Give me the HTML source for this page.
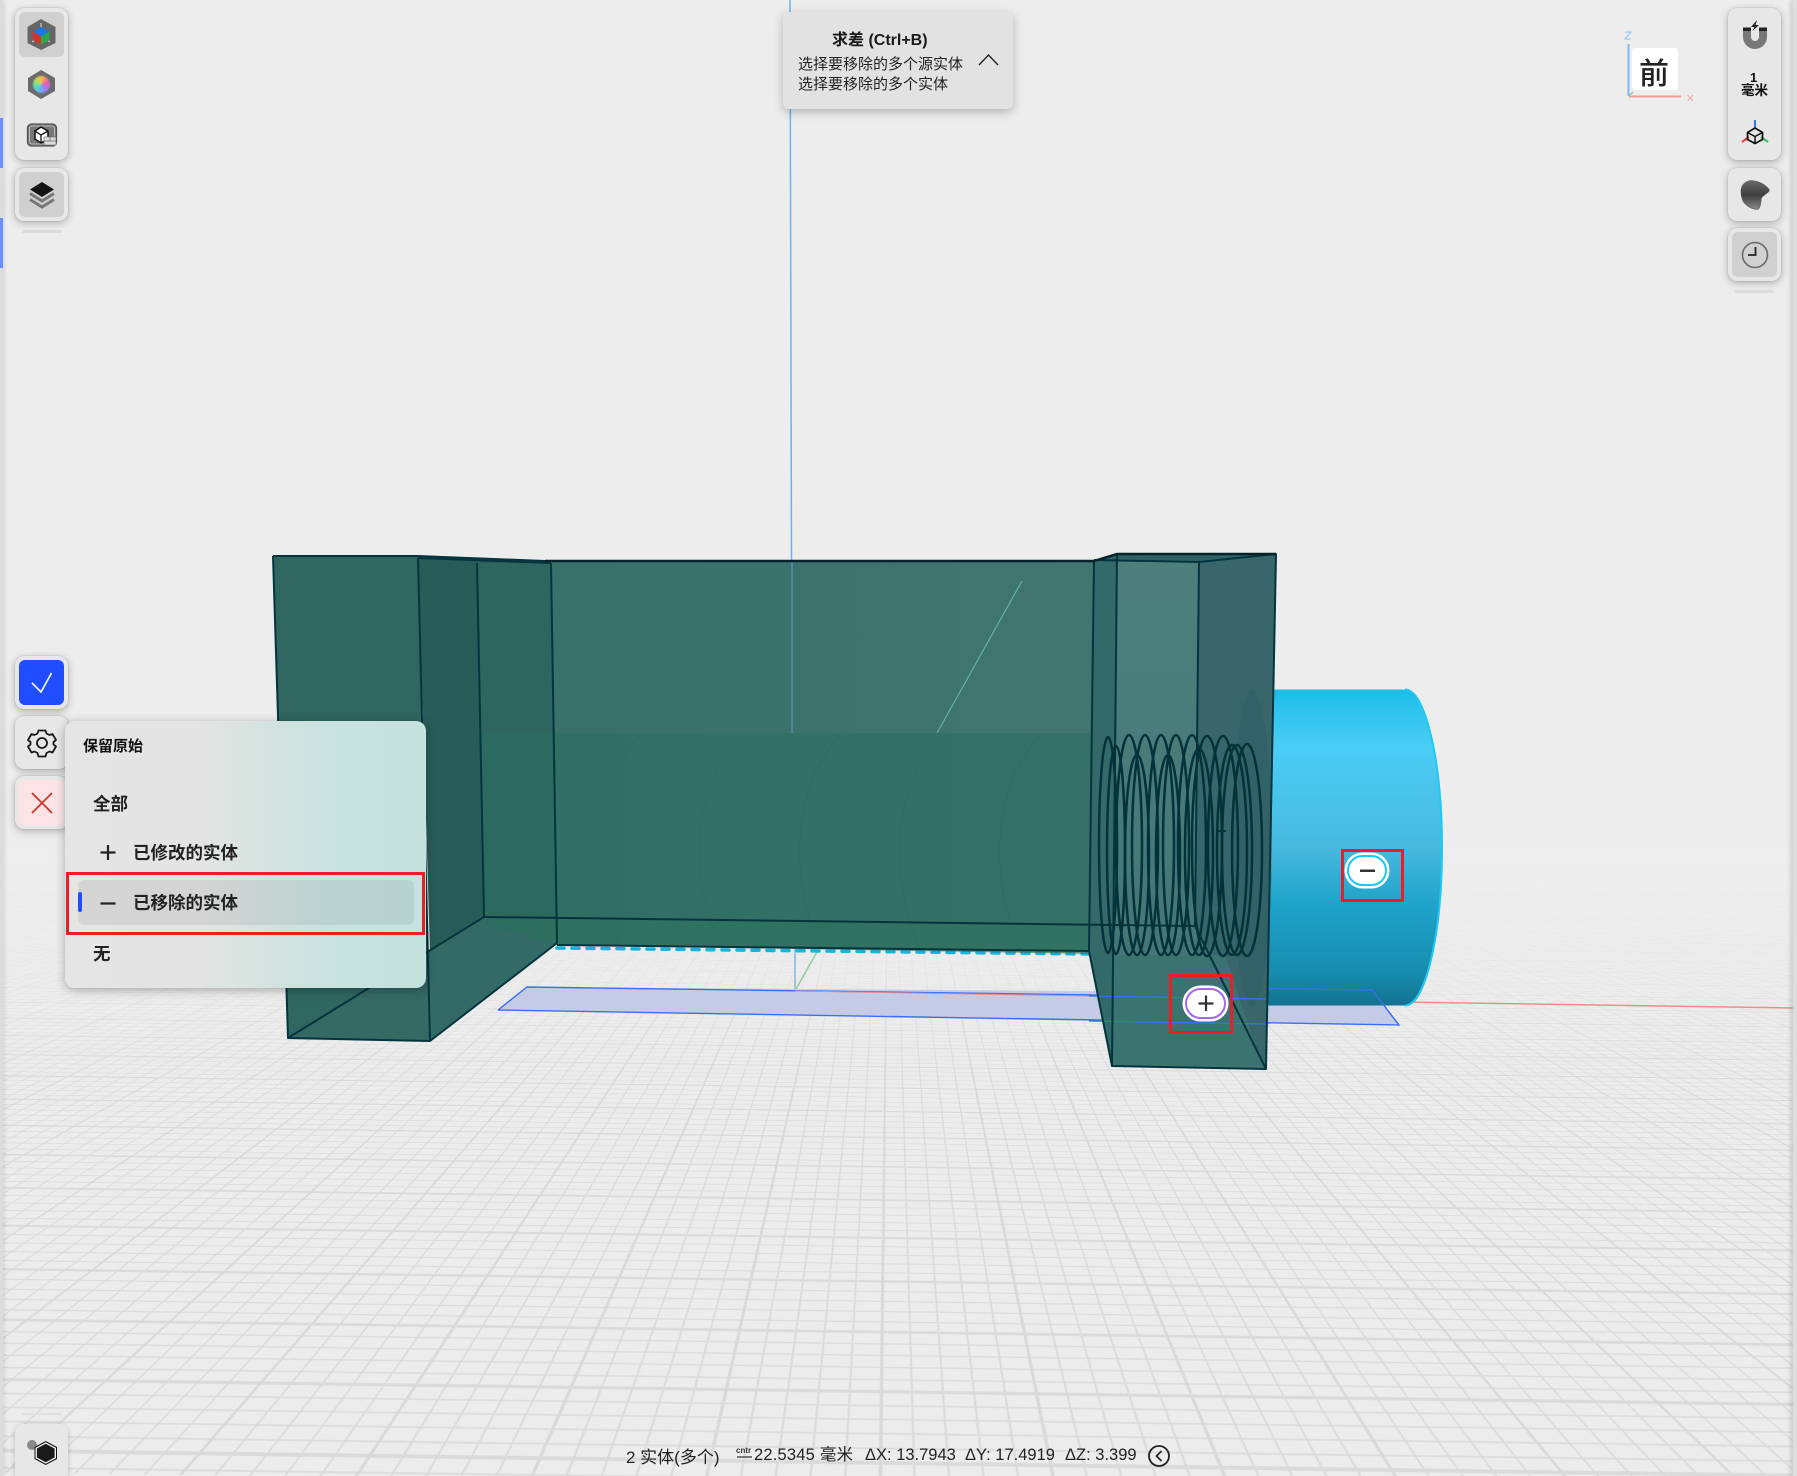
<!DOCTYPE html>
<html><head><meta charset="utf-8"><style>
*{box-sizing:border-box;margin:0;padding:0}
html,body{width:1797px;height:1476px;overflow:hidden;background:#ededed}
body{position:relative;font-family:"Liberation Sans","Noto Sans CJK SC",sans-serif;color:#111}
.g{position:absolute;left:0;top:0;width:1797px;height:1476px;overflow:hidden;background:#ececec}
.r{position:absolute;left:0;top:0;width:1797px;height:1476px;perspective:1000px;perspective-origin:890px 660px;transform:rotate(.8deg);transform-origin:890px 660px}
.p{position:absolute;left:-2610px;top:-130px;width:7000px;height:2900px;transform:translateZ(-1250px) rotateX(90deg);background-color:#ececec;background-image:linear-gradient(90deg,#d9d9d9 3px,transparent 3px),linear-gradient(0deg,#dadada 3.5px,transparent 3.5px),linear-gradient(90deg,#dbdbdb 2px,transparent 2px),linear-gradient(0deg,#dcdcdc 2.5px,transparent 2.5px);background-size:140px 100%,100% 80px,28px 100%,100% 16px}
.f{position:absolute;left:0;top:0;width:1797px;height:1100px;background:linear-gradient(180deg,#ededed 0,#ededed 840px,rgba(237,237,237,.85) 920px,rgba(237,237,237,.35) 1000px,rgba(237,237,237,0) 1080px)}
svg.s{position:absolute;left:0;top:0}
.pn{position:absolute;width:53px;background:#e7e7e7;border-radius:9px;box-shadow:0 2px 8px rgba(0,0,0,.28),0 0 1px rgba(0,0,0,.3);overflow:hidden}
.in{position:absolute;left:4px;top:4px;width:45px;height:45px;border-radius:6px;background:#d0d0d0}
.h{position:absolute;height:3px;width:40px;background:#dcdcdc;border-radius:2px}
.t{position:absolute;line-height:1;white-space:nowrap}
.b{font-weight:700}
.st{font-size:16.5px;color:#222}
</style></head><body>
<div class="g"><div class="r"><div class="p"></div></div><div class="f"></div></div>

<svg class="s" width="1797" height="1476" viewBox="0 0 1797 1476">
<defs>
<linearGradient id="cy" x1="0" y1="0" x2="0" y2="1"><stop offset="0" stop-color="#1cbde8"/><stop offset=".18" stop-color="#4acdf6"/><stop offset=".5" stop-color="#48b9de"/><stop offset=".68" stop-color="#1fa3ca"/><stop offset=".9" stop-color="#168cae"/><stop offset="1" stop-color="#137290"/></linearGradient>
<linearGradient id="mn" x1="0" y1="0" x2="1" y2="0"><stop offset="0" stop-color="#38706a"/><stop offset="1" stop-color="#427570"/></linearGradient>
<linearGradient id="pn" x1="0" y1="0" x2="0" y2="1"><stop offset="0" stop-color="#4e7f7d"/><stop offset="1" stop-color="#3f7573"/></linearGradient>
</defs>
<line x1="790" y1="0" x2="792" y2="740" stroke="#6fb0ee" stroke-width="1.5"/>
<line x1="795" y1="945" x2="795" y2="991" stroke="#7fb6ea" stroke-width="1.5"/>
<line x1="795" y1="991" x2="818" y2="950" stroke="#8fcf9c" stroke-width="1.5"/>
<line x1="1400" y1="1002" x2="1793" y2="1008" stroke="#ee8e88" stroke-width="1.5"/>
<polygon points="498,1010 527,987 1372,993 1399,1025" fill="#c5cbe6"/>
<path d="M498 1010L527 987L1240 997M498 1010L1399 1025L1372 990L1227 988" fill="none" stroke="#3d6ef0" stroke-width="1.4"/>
<line x1="795" y1="991" x2="1090" y2="996" stroke="#e08a90" stroke-width="1"/>
<path d="M1260 689.500H1407C1426 689.500 1442 760 1442 848C1442 936 1426 1005.500 1407 1005.500H1260Z" fill="url(#cy)"/>
<path d="M1405 689.500C1425 689.500 1442 760 1442 848C1442 936 1425 1005.500 1405 1005.500" fill="none" stroke="#1fcaf2" stroke-width="2"/>
<path d="M1226 988L1372 990L1399 1025" fill="none" stroke="#3d6ef0" stroke-width="1.2"/>
<line x1="557" y1="948" x2="1089" y2="954" stroke="#17b4dc" stroke-width="3.500" stroke-dasharray="7 8" stroke-linecap="round"/>
<polygon points="273,556 418,556 430,1041 288,1038" fill="#2f665f"/>
<polygon points="418,556 545,561 551,563 557,943 484,917 430,950" fill="#285c58"/>
<polygon points="477,563 551,563 557,943 484,917" fill="#2f655f"/>
<polygon points="288,1038 430,1041 557,943 484,917" fill="#346964"/>
<polygon points="430,950 484,917 557,943 430,1041" fill="#336a66"/>
<polygon points="551,561 1094,561 1089,951 557,945" fill="url(#mn)"/>
<polygon points="480,733 1150,733 1150,955 557,945 484,925" fill="#2a6e60" opacity=".5"/>
<polygon points="484,917 1195,926 1195,955 557,945" fill="#2d735e" opacity=".5"/>
<g fill="none" stroke="#2a665c" stroke-width="1.500" opacity=".18">
<path d="M620 945C590 880 590 790 640 735M720 947C690 880 690 790 740 735M820 948C790 880 790 790 840 735M920 949C890 880 890 790 940 735M1020 950C990 880 990 790 1040 735"/>
</g>
<polygon points="1094,560 1117,554 1112,1066 1089,951" fill="#336a69"/>
<polygon points="1117,554 1199,562 1195,926 1266,1069 1112,1066" fill="url(#pn)"/>
<polygon points="1199,562 1276,554 1266,1069 1195,926" fill="#38666b"/>
<polygon points="1117,554 1276,554 1199,562 1094,560" fill="#2f6264"/>
<polygon points="1112,955 1225,955 1262,1066 1112,1066" fill="#3b7371"/>
<ellipse cx="1252" cy="848" rx="20" ry="158" fill="#24585e" opacity=".28"/>
<line x1="937" y1="733" x2="1022" y2="581" stroke="#5fb59a" stroke-width="1.2"/>
<line x1="792" y1="561" x2="792" y2="733" stroke="#5f9fc0" stroke-width="1"/>
<path d="M1089 996L1266 999M1089 1021L1266 1024" stroke="#2f78e8" stroke-width="1.3" fill="none"/>
<g fill="none" stroke="#04343e" stroke-width="2" stroke-linejoin="round">
<path d="M273 556L288 1038L430 1041L557 943M273 556H418L545 561H1094L1117 554H1276L1266 1069L1112 1066L1089 951L1094 560"/>
<path d="M418 558L430 1041M288 1038L484 917M477 563L484 917M551 563L557 943M418 558L551 563"/>
<path d="M484 917L1195 926M557 945L1089 951"/>
<path d="M1117 554L1112 1066M1094 560L1199 562L1276 554M1199 562L1195 926L1266 1069"/>
<path d="M1218 831H1226"/>
</g>
<path d="M545 561H1094L1117 554H1276" fill="none" stroke="#06222a" stroke-width="2.400"/>
<g fill="none" stroke="#03323b" stroke-width="2.500">
<ellipse cx="1108" cy="845" rx="9" ry="108"/><ellipse cx="1116" cy="850" rx="9" ry="104"/>
<ellipse cx="1129" cy="845" rx="13" ry="110"/><ellipse cx="1137" cy="855" rx="12" ry="100"/>
<ellipse cx="1145" cy="845" rx="13" ry="110"/><ellipse cx="1161" cy="845" rx="13" ry="110"/>
<ellipse cx="1168" cy="855" rx="12" ry="100"/><ellipse cx="1176" cy="845" rx="13" ry="110"/>
<ellipse cx="1192" cy="845" rx="14" ry="110"/><ellipse cx="1199" cy="852" rx="14" ry="103"/>
<ellipse cx="1207" cy="846" rx="15" ry="110"/><ellipse cx="1223" cy="846" rx="15" ry="110"/>
<ellipse cx="1232" cy="850" rx="15" ry="105"/><ellipse cx="1237" cy="850" rx="15" ry="105"/>
<ellipse cx="1247" cy="850" rx="15" ry="106"/>
</g>
<rect x="1346" y="854" width="42" height="33" rx="16.500" fill="#fff" stroke="#fff" stroke-width="3"/>
<rect x="1348" y="856" width="38" height="29" rx="14.500" fill="#fff" stroke="#18c9f7" stroke-width="2"/>
<rect x="1360" y="869.500" width="15" height="2.500" fill="#333"/>
<rect x="1184" y="987" width="43" height="33" rx="16.500" fill="#fff" stroke="#fff" stroke-width="3"/>
<rect x="1186" y="989" width="39" height="29" rx="14.500" fill="#fff" stroke="#a566f0" stroke-width="2"/>
<path d="M1206 995.500V1011M1198.500 1003.500H1213.500" stroke="#333" stroke-width="2.200" fill="none"/>
<rect x="1342.500" y="850.500" width="60" height="50" fill="none" stroke="#ee1c25" stroke-width="3"/>
<rect x="1170.500" y="975.500" width="61" height="57" fill="none" stroke="#ee1c25" stroke-width="3"/>
</svg>

<div style="position:absolute;left:0;top:0;width:3px;height:1476px;background:#dcdcdc;box-shadow:1px 0 4px rgba(0,0,0,.15)"></div>
<div style="position:absolute;left:0;top:118px;width:3px;height:50px;background:#6a8eff"></div>
<div style="position:absolute;left:0;top:218px;width:3px;height:50px;background:#6a8eff"></div>
<div style="position:absolute;left:1793px;top:0;width:4px;height:1476px;background:#dedede;box-shadow:-2px 0 5px rgba(0,0,0,.18)"></div>

<div class="pn" style="left:15px;top:8px;height:152px"><div class="in"></div></div>
<div class="pn" style="left:15px;top:168px;height:53px"><div class="in"></div></div>
<div class="h" style="left:22px;top:230px"></div>
<svg class="s" width="80" height="230" viewBox="0 0 80 230">
<polygon points="41,19 55.500,27 55.500,43 41,50 27.500,43 27.500,27" fill="#666"/>
<path d="M32 42L41 36L50 42M41 23V30" stroke="#ddd" stroke-width="1" fill="none"/>
<polygon points="41,27 49.500,31.500 41,36.500 33,31.500" fill="#1b76e2"/>
<polygon points="33,31.500 41,36.500 41,45 33,40" fill="#d6322a"/>
<polygon points="49.500,31.500 41,36.500 41,45 49.500,40" fill="#2ca64a"/>
<polygon points="41,70 55,78 55,91 41,99 28,91 28,78" fill="#6b6b6b"/>
<rect x="27.500" y="124" width="29" height="22" rx="4" fill="#787878" stroke="#555" stroke-width="1.300"/>
<rect x="29.500" y="126" width="25" height="18" rx="2.500" fill="#787878" stroke="#ccc" stroke-width=".8"/>
<polygon points="41,127 48,131 48,139 41,143 35,139 35,131" fill="#fff" stroke="#111" stroke-width="1.500"/>
<path d="M35 131L41 135L48 131M41 135V143" fill="none" stroke="#111" stroke-width="1.300"/>
<rect x="44" y="137" width="12" height="8" fill="#ddd" stroke="#666" stroke-width=".6"/>
<path d="M44 141H56M50 137V141" stroke="#666" stroke-width=".8"/>
<polygon points="42,182 54,189.500 42,197 30,189.500" fill="#141414"/>
<path d="M30 193.500L42 201L54 193.500" fill="none" stroke="#777" stroke-width="3"/>
<path d="M30 199.500L42 207L54 199.500" fill="none" stroke="#777" stroke-width="3"/>
</svg>
<div style="position:absolute;left:33px;top:76px;width:17px;height:17px;border-radius:50%;background:conic-gradient(#f7c24a,#f25fa0,#b86cf0,#6fa8f5,#4fdcc8,#9fe36a,#f7c24a);filter:blur(.7px)"></div>

<div class="pn" style="left:15px;top:656px;height:53px"><div class="in" style="background:#1f4dff"></div></div>
<div class="pn" style="left:15px;top:716px;height:53px"></div>
<div class="pn" style="left:15px;top:776px;height:53px"><div class="in" style="background:#fce4e6"></div></div>
<svg class="s" width="80" height="840" viewBox="0 0 80 840">
<path d="M32 683L41 692L51.500 673" fill="none" stroke="#fff" stroke-width="1.600"/>
<g transform="translate(42 743)" fill="none" stroke="#1a1a1a" stroke-width="1.800" stroke-linejoin="round">
<circle r="5"/>
<path d="M-3.500 -12.500H3.500L4.500 -9.500L7.500 -8L10.500 -9L14 -3L11.500 -1V1.500L14 3.500L10.500 9.500L7.500 8.500L4.500 10L3.500 13.500H-3.500L-4.500 10L-7.500 8.500L-10.500 9.500L-14 3.500L-11.500 1.500V-1L-14 -3L-10.500 -9L-7.500 -8L-4.500 -9.500Z"/>
</g>
<path d="M32 793L52 813M52 793L32 813" stroke="#cf3228" stroke-width="1.700" fill="none"/>
</svg>

<div style="position:absolute;left:65px;top:721px;width:361px;height:267px;border-radius:10px;background:linear-gradient(90deg,#e5e5e5 0,#e3e4e3 38%,#d0e2de 62%,#c6e3df 80%,#c5e2df 100%);box-shadow:0 2px 10px rgba(0,0,0,.3)"></div>
<div style="position:absolute;left:78px;top:880px;width:336px;height:45px;border-radius:6px;background:rgba(0,0,0,.065)"></div>
<div style="position:absolute;left:78px;top:892px;width:4px;height:20px;border-radius:2px;background:#1f4dff"></div>
<div class="t b" style="left:83px;top:739px;font-size:15px">保留原始</div>
<div class="t b" style="left:93px;top:796px;font-size:17.500px;color:#222">全部</div>
<svg class="s" width="130" height="930" viewBox="0 0 130 930"><path d="M108 845V860M100.500 852.500H115.500" stroke="#222" stroke-width="2.200"/><path d="M100.500 903.500H115.500" stroke="#222" stroke-width="2.200"/></svg>
<div class="t b" style="left:133px;top:845px;font-size:17.500px;color:#222">已修改的实体</div>
<div class="t b" style="left:133px;top:895px;font-size:17.500px;color:#222">已移除的实体</div>
<div class="t b" style="left:93px;top:946px;font-size:17.500px;color:#222">无</div>
<div style="position:absolute;left:66px;top:872px;width:359px;height:63px;border:3px solid #ee1c25"></div>

<div style="position:absolute;left:783px;top:12px;width:230px;height:97px;border-radius:6px;background:#e2e2e2;box-shadow:0 3px 10px rgba(0,0,0,.25)"></div>
<div class="t" style="left:832px;top:33px;font-size:16px;font-weight:700;color:#1a1a1a">求差 (Ctrl+B)</div>
<div class="t" style="left:798px;top:57px;font-size:15px;color:#222">选择要移除的多个源实体</div>
<div class="t" style="left:798px;top:77px;font-size:15px;color:#222">选择要移除的多个实体</div>
<svg class="s" width="1040" height="90" viewBox="0 0 1040 90"><path d="M979 65L988.500 55L998 65" fill="none" stroke="#222" stroke-width="1.400"/></svg>

<div style="position:absolute;left:1632px;top:48px;width:46px;height:42px;background:#fff;border-radius:3px"></div>
<div class="t" style="left:1639px;top:56px;font-size:30px;font-weight:500;color:#222;font-family:'Noto Sans CJK SC',sans-serif">前</div>
<svg class="s" width="1797" height="120" viewBox="0 0 1797 120">
<path d="M1628.500 44V96" stroke="#7fb8f5" stroke-width="2"/><path d="M1629 96.500H1681" stroke="#ee9a98" stroke-width="2"/><path d="M1629 96L1633 92" stroke="#8fd09a" stroke-width="1.500"/>
<path d="M1625 32H1631L1625 39H1631" fill="none" stroke="#8fbdf0" stroke-width="1"/>
<path d="M1687.500 95L1693 101M1693 95L1687.500 101" fill="none" stroke="#eeaaa8" stroke-width="1"/>
</svg>

<div class="pn" style="left:1728px;top:8px;height:152px"></div>
<div class="pn" style="left:1728px;top:168px;height:53px"></div>
<div class="pn" style="left:1728px;top:228px;height:53px"><div class="in"></div></div>
<div class="h" style="left:1734px;top:290px"></div>
<div class="t b" style="left:1750px;top:71px;font-size:13px;color:#111">1</div>
<div class="t" style="left:1741px;top:84px;font-size:13.500px;font-weight:700;color:#111">毫米</div>
<svg class="s" width="1797" height="300" viewBox="0 0 1797 300">
<path d="M1747 31V37A8 8 0 0 0 1763 37V31" fill="none" stroke="#787878" stroke-width="8"/>
<rect x="1743" y="27.500" width="8" height="3.500" fill="#222"/><rect x="1759" y="27.500" width="8" height="3.500" fill="#222"/>
<polygon points="1757,20 1751,27 1754.500,27 1752.500,31 1759,25 1755.500,25" fill="#222"/>
<path d="M1755 120V128" stroke="#2a7cf0" stroke-width="2"/>
<path d="M1749 137L1742 142" stroke="#ee3b30" stroke-width="2"/><path d="M1761 137L1768 142" stroke="#30c060" stroke-width="2"/>
<polygon points="1755,128 1762.500,132.500 1762.500,139.500 1755,143.500 1747.500,139.500 1747.500,132.500" fill="none" stroke="#111" stroke-width="1.700"/>
<path d="M1747.500 132.500L1755 136.500L1762.500 132.500M1755 136.500V143.500" fill="none" stroke="#111" stroke-width="1.500"/>
<defs><linearGradient id="fl" x1="0" y1="0" x2="0" y2="1"><stop offset="0" stop-color="#6a6a6a"/><stop offset=".5" stop-color="#3e3e3e"/><stop offset="1" stop-color="#8a8a8a"/></linearGradient></defs>
<path d="M1741 191C1741 184 1747 180.500 1752 180.500C1759 181 1766 185 1769.500 190C1769 193 1763 195 1761.500 198C1760.500 203 1761 207 1758 209.500C1752 209.500 1746 206 1743 201C1741.500 198 1741 195 1741 191Z" fill="url(#fl)" stroke="#555" stroke-width=".6"/>
<circle cx="1755" cy="255" r="12.500" fill="none" stroke="#6a6a6a" stroke-width="1.600"/>
<path d="M1755.500 247V255H1748" fill="none" stroke="#222" stroke-width="1.800"/>
</svg>

<div class="h" style="left:22px;top:1413px;background:#e0e0e0;height:2px"></div>
<div style="position:absolute;left:15px;top:1424px;width:53px;height:60px;border-radius:9px;background:#e7e7e7;box-shadow:0 1px 6px rgba(0,0,0,.2)"></div>
<svg class="s" width="80" height="1476" viewBox="0 0 80 1476">
<circle cx="32" cy="1445" r="5" fill="#8a8a8a"/>
<polygon points="45.700,1441 57,1447 57,1459 45.700,1465 34.500,1459 34.500,1447" fill="#111"/>
<polygon points="45.700,1442.300 56,1447.700 56,1458.300 45.700,1463.700 35.500,1458.300 35.500,1447.700" fill="#f2f2f2"/>
<polygon points="45.700,1443.800 54.600,1448.500 54.600,1457.500 45.700,1462.200 36.900,1457.500 36.900,1448.500" fill="#1a1a1a"/>
</svg>

<div class="t st" style="left:626px;top:1449px;font-size:17px">2 实体(多个)</div>
<svg class="s" width="1797" height="1476" viewBox="0 0 1797 1476"><path d="M737 1457H752" stroke="#777" stroke-width="2"/><circle cx="1159" cy="1456" r="10" fill="none" stroke="#222" stroke-width="1.800"/><path d="M1161.500 1451L1156.500 1456L1161.500 1461" fill="none" stroke="#222" stroke-width="1.700"/></svg>
<div class="t" style="left:736px;top:1447px;font-size:8px;color:#333;font-weight:700">cntr</div>
<div class="t st" style="left:754px;top:1447px;letter-spacing:.2px">22.5345 毫米</div>
<div class="t st" style="left:865px;top:1447px">ΔX: 13.7943</div>
<div class="t st" style="left:965px;top:1447px">ΔY: 17.4919</div>
<div class="t st" style="left:1065px;top:1447px">ΔZ: 3.399</div>
</body></html>
